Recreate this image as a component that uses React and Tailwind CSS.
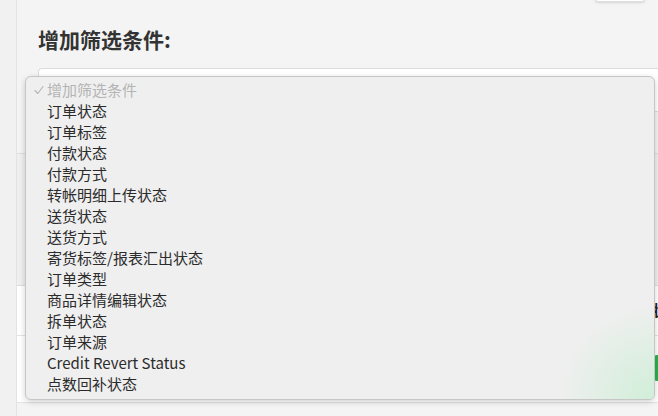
const options = [
  "订单状态",
  "订单标签",
  "付款状态",
  "付款方式",
  "转帐明细上传状态",
  "送货状态",
  "送货方式",
  "寄货标签/报表汇出状态",
  "订单类型",
  "商品详情编辑状态",
  "拆单状态",
  "订单来源",
  "Credit Revert Status",
  "点数回补状态",
];

export default function App() {
  return (
    <div
      className="relative flex w-[658px] h-[416px] overflow-hidden bg-[#f2f2f2] text-[#2b2b2b]"
      style={{ fontFamily: '"Noto Sans CJK SC", "Noto Sans", sans-serif' }}
    >
      <div className="w-[17px] shrink-0 bg-[#f1f1f1] border-r border-[#e3e3e3]" />

      <div className="flex-1 flex flex-col bg-[#f4f4f4] overflow-hidden">
        {/* header */}
        <div className="h-[68px] flex justify-between pl-[21px]">
          <h2 className="pt-[27px] text-[21px] leading-[25px] font-bold text-[#333]">增加筛选条件:</h2>
          <div className="mr-[13px] -mt-[10px] w-[50px] h-[12px] bg-white border border-[#dedede] rounded-[3px] shadow-sm" />
        </div>

        {/* select */}
        <div className="pl-[21px]">
          <div className="h-[44px] bg-white border border-r-0 border-[#dcdcdc] rounded-l-[4px]" />
        </div>

        <div className="h-[41px]" />

        {/* table */}
        <div className="flex flex-col border-t border-[#dcdcdc]">
          <div className="h-[132px] bg-[#efefef] border-b border-[#dcdcdc]" />
          <div className="h-[50px] bg-white border-b border-[#e4e4e4] flex items-center pl-[635px]">
            <span className="text-[15px] font-bold text-[#222] whitespace-nowrap">状态</span>
          </div>
          <div className="h-[67px] bg-white border-b border-[#e4e4e4] flex items-start justify-end pt-[19px]">
            <div className="-mr-[20px] w-[24px] h-[26px] bg-[#28b24b] rounded-[3px]" />
          </div>
          <div className="flex-1 bg-[#f7f7f7]" />
        </div>
      </div>

      {/* native select menu */}
      <div className="absolute left-[25px] top-[76px] w-[630px] h-[324px] rounded-[6px] border border-[#c6c6c6] bg-[#efefef] shadow-[0_2px_6px_rgba(0,0,0,0.18)] overflow-hidden">
        <div className="absolute inset-0 bg-[radial-gradient(circle_at_100%_100%,rgba(200,238,210,0.8),rgba(239,239,239,0)_95px)]" />
        <div className="relative flex flex-col pt-[2px] text-[15px] leading-[21px]">
          <div className="flex items-center h-[21px] text-[#b4b4b4]">
            <span className="w-[21px] flex justify-end pr-[3px]">
              <svg width="10" height="10" viewBox="0 0 10 10" fill="none">
                <path d="M1 5.5 L3.8 8.5 L9 1.5" stroke="#b4b4b4" strokeWidth="1.1" strokeLinecap="round" strokeLinejoin="round" />
              </svg>
            </span>
            <span>增加筛选条件</span>
          </div>
          {options.map((opt) => (
            <div key={opt} className="h-[21px] pl-[21px] whitespace-nowrap">
              {opt}
            </div>
          ))}
        </div>
      </div>
    </div>
  );
}
